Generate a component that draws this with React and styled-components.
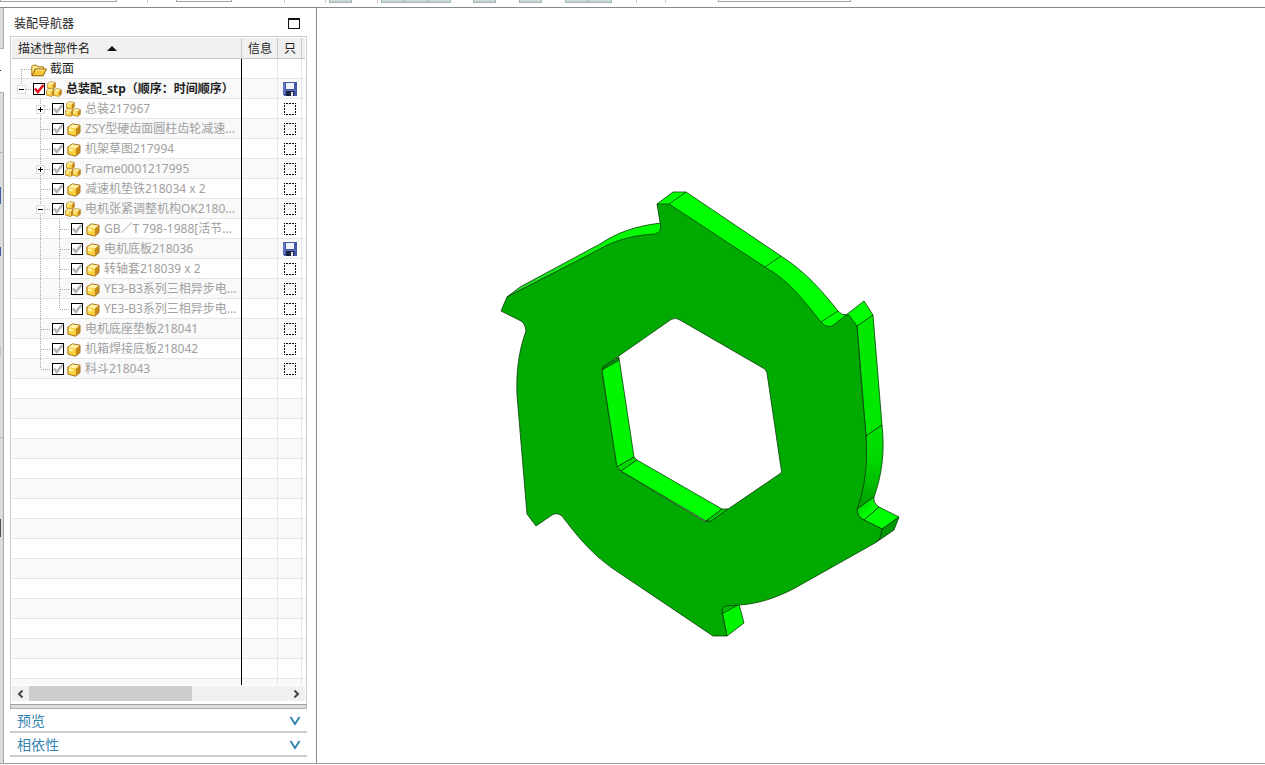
import React from "react";
import styled, { createGlobalStyle } from "styled-components";

const tools = [
  { type: "field", width: 117, gap: 0 },
  { type: "line", gap: 30 },
  { type: "field", width: 56, gap: 28 },
  { type: "line", gap: 52 },
  { type: "line", gap: 40 },
  { type: "toggle", width: 23, gap: 3 },
  { type: "line", gap: 25 },
  { type: "toggle", width: 24, gap: 3 },
  { type: "toggle", width: 24, gap: -1 },
  { type: "toggle", width: 24, gap: -1 },
  { type: "toggle", width: 23, gap: 22 },
  { type: "toggle", width: 23, gap: 23 },
  { type: "toggle", width: 24, gap: 23 },
  { type: "toggle", width: 24, gap: -1 },
  { type: "line", gap: 24 },
  { type: "line", gap: 28 },
  { type: "field", width: 133, gap: 52 },
];

const tabs = [
  { height: 41 },
  { height: 44, active: true, mark: "#222222", size: 1 },
  { height: 60 },
  { height: 85, mark: "#3f5f9f", size: 17, open: true },
  { height: 27, mark: "#3f5f9f", size: 9, open: true },
  { height: 173, mark: "#c4c4c4", size: 11 },
  { height: 179, mark: "#505050", size: 18, open: true },
];

const parts = [
  { name: "截面", level: 0, icon: "folder", down: true },
  {
    name: "总装配_stp（顺序：时间顺序）",
    level: 0,
    icon: "assembly",
    up: true,
    toggle: "minus",
    root: true,
    saved: true,
  },
  { name: "总装217967", level: 1, icon: "assembly", toggle: "plus" },
  { name: "ZSY型硬齿面圆柱齿轮减速...", level: 1, icon: "part" },
  { name: "机架草图217994", level: 1, icon: "part" },
  { name: "Frame0001217995", level: 1, icon: "assembly", toggle: "plus" },
  { name: "减速机垫铁218034 x 2", level: 1, icon: "part" },
  {
    name: "电机张紧调整机构OK2180...",
    level: 1,
    icon: "assembly",
    toggle: "minus",
  },
  { name: "GB∕T 798-1988[活节...", level: 2, icon: "part" },
  { name: "电机底板218036", level: 2, icon: "part", saved: true },
  { name: "转轴套218039 x 2", level: 2, icon: "part" },
  { name: "YE3-B3系列三相异步电...", level: 2, icon: "part" },
  { name: "YE3-B3系列三相异步电...", level: 2, icon: "part", last: true },
  { name: "电机底座垫板218041", level: 1, icon: "part" },
  { name: "机箱焊接底板218042", level: 1, icon: "part" },
  { name: "料斗218043", level: 1, icon: "part", last: true },
];

const emptyRows = Array.from({ length: 40 }, (_, i) => i);

const Guide = ({ up, down, right, toggle }) => (
  <svg width="19" height="20" viewBox="0 0 19 20" shapeRendering="crispEdges">
    <g stroke="#a8a8a8" strokeDasharray="1 1">
      {up && <path d="M9.5 0V10" />}
      {down && <path d="M9.5 10V20" />}
      {right && <path d="M10 10.5H19" />}
    </g>
    {toggle && (
      <>
        <rect x="5.5" y="6.5" width="8" height="8" fill="#fff" stroke="#dcdcdc" />
        <path
          d={toggle === "plus" ? "M7 10.5H12M9.5 8V13" : "M7 10.5H12"}
          stroke="#000"
        />
      </>
    )}
  </svg>
);

const Cube = ({ x = 0, y = 0, size = 14 }) => (
  <svg x={x} y={y} width={size} height={size} viewBox="0 0 14 14">
    <path d="M.8 4 5.5 .8 13 2.200 8.800 5.500Z" fill="#fff2a6" />
    <path d="M.8 4 8.800 5.500V13.200L1 11.200Z" fill="#fdd23c" />
    <path d="M8.800 5.500 13 2.200V9.600L8.800 13.200Z" fill="#c98a12" />
    <path
      d="M.8 4 5.500 .8 13 2.200V9.600L8.800 13.200 1 11.200Z"
      fill="none"
      stroke="#a8741a"
      strokeLinejoin="round"
    />
    <path d="M2 5.500 6 6.300V8.500L2 8Z" fill="#fff3ac" />
  </svg>
);

const PartIcon = ({ icon }) => (
  <svg width="16" height="16" viewBox="0 0 16 16">
    {icon === "part" && <Cube x={2} y={2} size={14} />}
    {icon === "assembly" && (
      <>
        <Cube x={1} y={0} size={9} />
        <Cube x={0} y={7} size={9} />
        <Cube x={7} y={7} size={9} />
      </>
    )}
    {icon === "folder" && (
      <>
        <path
          d="M.8 14.500V5.500L2 4.200H5.500L6.800 5.800H12.500V8"
          fill="#ffe78a"
          stroke="#a87510"
        />
        <path
          d="M1 14.800 4.200 8H15.500L12.200 14.800Z"
          fill="#fbc52f"
          stroke="#8d600c"
          strokeLinejoin="round"
        />
        <path d="M5 9.200H13.600" stroke="#fff0a8" />
      </>
    )}
  </svg>
);

const SaveIcon = () => (
  <svg width="14" height="14" viewBox="0 0 14 14">
    <path d="M0 0H14V14H1.500L0 12.500Z" fill="#4456a8" />
    <path d="M1 1V12" stroke="#8797d8" />
    <path d="M3 1H11V7H3Z" fill="#eef3fb" />
    <path d="M0 8H14V9H0Z" fill="#5c70bc" />
    <path d="M3 9H11V14H3Z" fill="#1c2340" />
    <path d="M8 10H10V14H8Z" fill="#dfe5f5" />
  </svg>
);

const UnloadedIcon = () => (
  <svg width="14" height="14" viewBox="0 0 14 14" shapeRendering="crispEdges">
    <path
      d="M1 1.500H13M1 12.500H13M1.500 1V13M12.500 1V13"
      stroke="#000"
      strokeDasharray="2 1"
      strokeDashoffset="1"
    />
  </svg>
);

const Chevron = () => (
  <svg width="12" height="10" viewBox="0 0 12 10">
    <path d="M1.500 1 6 8 10.500 1" fill="none" stroke="#3684b0" strokeWidth="2" />
  </svg>
);

const Model = () => (
  <Drawing viewBox="317 8 948 755" role="img">
    <defs>
      <linearGradient id="shade" x1="0" y1="0" x2="0" y2="1">
        <stop offset="0" stopColor="#00e400" />
        <stop offset="0.45" stopColor="#00d400" />
        <stop offset="1" stopColor="#009c00" />
      </linearGradient>
      <linearGradient id="fillet" x1="0" y1="0" x2="1" y2="1">
        <stop offset="0" stopColor="#00c000" />
        <stop offset="0.6" stopColor="#00ff00" />
      </linearGradient>
      <linearGradient id="back" x1="0" y1="1" x2="1" y2="0">
        <stop offset="0" stopColor="#2fc82f" />
        <stop offset="0.5" stopColor="#10f010" />
        <stop offset="1" stopColor="#00ff00" />
      </linearGradient>
    </defs>
    <g stroke="#064006" strokeWidth="0.8" strokeLinejoin="round">
      <path
        d="M507 297 520 287 600 244C618 232 636 226 661 223L661 236 598 252Z"
        fill="url(#back)"
      />
      <path
        d="M657 204 673 192H686L781 256C803 270 820 288 838 311Q841 315 847 315L832 329 818 325 760 270 669 208Z"
        fill="#00ff00"
      />
      <path d="M846 315 864 301 873 315 857 327Z" fill="#00ff00" />
      <path d="M857 326 873 315 882 425 866 436Z" fill="#00e800" />
      <path
        d="M866 436 882 425C885 451 882 475 874 497L857 509C866 480 867 460 866 436Z"
        fill="url(#shade)"
      />
      <path
        d="M857 509 874 497Q873 503 879 507L864 520Q857 517 857 509Z"
        fill="url(#fillet)"
      />
      <path d="M864 520 879 507 899 517 882 529Z" fill="#00ff00" />
      <path d="M882 529 899 517 894 530 875 543 880 538Z" fill="#009800" />
      <path d="M722 611 739 604 744 623 727 636Z" fill="#00f600" />
      <path d="M722 614V608L727 605H738Z" fill="#00bc00" />
      <path
        d="M657 204 669 204 765 267C788 280 802 298 821 322Q828 330 835 324L846 315H849L857 326 861 380 866 436C868 463 865 488 857 509Q857 517 864 520L882 529 880 538 875 543 795 588C776 598 758 604 739 605L726 606Q721 608 722 613L727 636H713L612 568C591 553 577 536 562 516Q557 512 552 515L536 526 527 514 517 395C516 371 519 350 526 331Q525 322 519 320L501 311 507 297 598 250C615 240 634 235 655 234Q660 233 661 228ZM671 319.500 603 367Q601 369 602 373L617 466Q618 470 622 472L704 521Q708 523 712 520L781 473Q782 471 781 468L767 373Q766 369 763 368L680 320Q676 317 671 319.500Z"
        fill="#00aa00"
        fillRule="evenodd"
      />
      <path d="M602 370 619 358 634 457 617 467Z" fill="#00f600" />
      <path d="M602 370 603 367 619 357 618 361Z" fill="#009000" />
      <path d="M617 467 634 457 637 460 621 471Z" fill="#00dc00" />
      <path d="M621 471 637 460 722 509 706 521Z" fill="#00ff00" />
      <path d="M706 521 722 509 728 509 711 521Z" fill="#00d000" />
      <path d="M669 204 686 192M765 267 781 256M821 322 838 311" fill="none" />
    </g>
  </Drawing>
);

const Tree = ({ part, id }) => (
  <Branch>
    {part.level > 0 && <Indent />}
    {part.level > 1 && <Guide up down />}
    {part.toggle ? (
      <Expander type="button" aria-expanded={part.toggle === "minus"}>
        <Guide
          up={part.up || part.level > 0}
          down={part.level > 0}
          right
          toggle={part.toggle}
        />
      </Expander>
    ) : (
      <Guide
        up={part.level > 0}
        down={part.level > 0 ? !part.last : part.down}
        right
      />
    )}
    {part.icon !== "folder" && (
      <CheckBox>
        <input type="checkbox" id={id} defaultChecked />
        <svg width="12" height="12" viewBox="0 0 12 12">
          <path
            d="M2 5.500 4.800 9 10.500 2"
            fill="none"
            stroke={part.root ? "#e8101c" : "#b4b4b4"}
            strokeWidth="2.600"
          />
        </svg>
      </CheckBox>
    )}
    <PartIcon icon={part.icon} />
    {part.icon === "folder" ? (
      <FolderName>{part.name}</FolderName>
    ) : (
      <PartName htmlFor={id} $root={part.root}>
        {part.name}
      </PartName>
    )}
  </Branch>
);

const App = () => {
  return (
    <>
      <GlobalStyle />
      <Page>
        <Toolbar>
          {tools.map((tool, i) => {
            if (tool.type === "field")
              return <Field key={i} $width={tool.width} $gap={tool.gap} />;
            if (tool.type === "toggle")
              return (
                <Toggle key={i} type="button" $width={tool.width} $gap={tool.gap} />
              );
            return <Separator key={i} $gap={tool.gap} />;
          })}
        </Toolbar>
        <Workspace>
          <Rail>
            {tabs.map((tab, i) => (
              <RailTab
                key={i}
                type="button"
                $height={tab.height}
                $active={tab.active}
                $open={tab.open}
              >
                {tab.mark && <Mark $color={tab.mark} $size={tab.size} />}
              </RailTab>
            ))}
          </Rail>
          <Navigator>
            <TitleBar>
              <Title>装配导航器</Title>
              <Maximize type="button" aria-label="最大化" />
            </TitleBar>
            <TreeBox>
              <Rows>
                <Table>
                  <colgroup>
                    <col />
                    <col width="36" />
                    <col width="24" />
                    <col width="3" />
                  </colgroup>
                  <thead>
                    <tr>
                      <HeadCell>
                        描述性部件名
                        <svg width="10" height="5" viewBox="0 0 10 5">
                          <path d="M0 5 5 0 10 5Z" fill="#111" />
                        </svg>
                      </HeadCell>
                      <HeadCell>信息</HeadCell>
                      <HeadCell>只</HeadCell>
                      <HeadCell $edge />
                    </tr>
                  </thead>
                  <tbody>
                    {parts.map((part, i) => (
                      <Row key={i}>
                        <NameCell>
                          <Tree part={part} id={"part" + i} />
                        </NameCell>
                        <Cell />
                        <Cell>
                          {part.saved && <SaveIcon />}
                          {!part.saved && part.icon !== "folder" && (
                            <UnloadedIcon />
                          )}
                        </Cell>
                        <Cell $edge />
                      </Row>
                    ))}
                    {emptyRows.map((i) => (
                      <Row key={"empty" + i}>
                        <NameCell />
                        <Cell />
                        <Cell />
                        <Cell $edge />
                      </Row>
                    ))}
                  </tbody>
                </Table>
              </Rows>
              <ScrollBar>
                <ScrollButton type="button" aria-label="向左">
                  <svg width="7" height="8" viewBox="0 0 7 8">
                    <path
                      d="M5.500 .5 2 4 5.500 7.500"
                      fill="none"
                      stroke="#444"
                      strokeWidth="2"
                    />
                  </svg>
                </ScrollButton>
                <Track>
                  <Thumb />
                </Track>
                <ScrollButton type="button" aria-label="向右">
                  <svg width="7" height="8" viewBox="0 0 7 8">
                    <path
                      d="M1.500 .5 5 4 1.500 7.500"
                      fill="none"
                      stroke="#444"
                      strokeWidth="2"
                    />
                  </svg>
                </ScrollButton>
              </ScrollBar>
            </TreeBox>
            <Splitter />
            <Section type="button">
              预览
              <Chevron />
            </Section>
            <Section type="button">
              相依性
              <Chevron />
            </Section>
          </Navigator>
          <Canvas>
            <Model />
          </Canvas>
        </Workspace>
      </Page>
    </>
  );
};

const GlobalStyle = createGlobalStyle`
  * {
    box-sizing: border-box;
  }
  body {
    margin: 0;
    background: #ffffff;
    color: #1e1e1e;
    font-family: "Noto Sans", "Noto Sans CJK SC", sans-serif;
    font-size: 12px;
  }
  button, input, select {
    margin: 0;
    padding: 0;
    font: inherit;
  }
  svg {
    display: block;
    flex: none;
  }
`;

const Page = styled.div`
  display: flex;
  flex-direction: column;
  height: 100vh;
  padding-bottom: 1px;
`;

const Toolbar = styled.div`
  display: flex;
  align-items: flex-end;
  height: 8px;
  padding-bottom: 4px;
  border-bottom: 1px solid #858b8b;
  overflow: hidden;
`;

const Field = styled.select`
  appearance: none;
  flex: none;
  width: ${({ $width }) => $width}px;
  height: 22px;
  margin: 0 0 1px ${({ $gap }) => $gap}px;
  border: 1px solid #a5a5a5;
  border-radius: 0;
  background: #ffffff;
`;

const Toggle = styled.button`
  flex: none;
  width: ${({ $width }) => $width}px;
  height: 22px;
  margin-left: ${({ $gap }) => $gap}px;
  border: 1px solid #a3b5b5;
  background: #c8d8d8;
`;

const Separator = styled.div`
  flex: none;
  width: 1px;
  height: 22px;
  margin-left: ${({ $gap }) => $gap}px;
  background: #c8c8c8;
`;

const Workspace = styled.div`
  display: flex;
  flex: 1;
  min-height: 0;
  border-bottom: 1px solid #a0a0a0;
`;

const Rail = styled.div`
  display: flex;
  flex-direction: column;
  flex: none;
  width: 4px;
  background: #dcdcdc;
  box-shadow: inset -1px 0 #a8a8a8;
`;

const RailTab = styled.button`
  display: flex;
  align-items: center;
  flex: none;
  height: ${({ $height }) => $height}px;
  border: 0;
  border-bottom: ${({ $open }) => ($open ? 0 : 1)}px solid #b4b4b4;
  background: ${({ $active }) => ($active ? "#ffffff" : "transparent")};
`;

const Mark = styled.span`
  width: 1px;
  height: ${({ $size }) => $size}px;
  background: ${({ $color }) => $color};
`;

const Navigator = styled.aside`
  display: flex;
  flex-direction: column;
  flex: none;
  width: 313px;
  padding: 0 9px 6px 6px;
  border-right: 1px solid #858585;
`;

const TitleBar = styled.header`
  display: flex;
  align-items: center;
  justify-content: space-between;
  height: 28px;
  padding: 2px 7px 0 4px;
`;

const Title = styled.h1`
  margin: 0;
  font-size: 12px;
  font-weight: 400;
`;

const Maximize = styled.button`
  width: 12px;
  height: 11px;
  border: 1px solid #111111;
  border-top-width: 2px;
  background: #ffffff;
`;

const TreeBox = styled.div`
  display: flex;
  flex-direction: column;
  flex: 1;
  min-height: 0;
  padding: 1px 1px 3px;
  border: 1px solid #cccccc;
  border-bottom: 0;
`;

const Rows = styled.div`
  flex: 1;
  min-height: 0;
  margin-bottom: 1px;
  overflow: hidden;
`;

const Table = styled.table`
  width: 100%;
  table-layout: fixed;
  border-collapse: separate;
  border-spacing: 0;
`;

const HeadCell = styled.th`
  height: 21px;
  padding: 2px 0 0 ${({ $edge }) => ($edge ? 0 : 6)}px;
  border-right: ${({ $edge }) => ($edge ? 0 : 1)}px solid #c8c8c8;
  border-bottom: 1px solid #c8c8c8;
  background: #f0f0f0;
  line-height: 18px;
  font-weight: 400;
  text-align: left;
  white-space: nowrap;
  svg {
    display: inline-block;
    margin-left: 17px;
    vertical-align: 2px;
  }
`;

const Row = styled.tr`
  &:nth-child(even) {
    background: #f9f9f9;
  }
`;

const Cell = styled.td`
  height: 20px;
  padding: 1px 0 0 ${({ $edge }) => ($edge ? 0 : 5)}px;
  border-right: ${({ $edge }) => ($edge ? 0 : 1)}px solid #e6e6e6;
  border-bottom: 1px solid #e6e6e6;
  line-height: 0;
`;

const NameCell = styled.td`
  height: 20px;
  padding: 0 1px 1px 0;
  box-shadow: inset -1px 0 #000000, inset 0 -1px #e6e6e6;
`;

const Branch = styled.div`
  display: flex;
  align-items: center;
  height: 19px;
`;

const Indent = styled.span`
  flex: none;
  width: 19px;
`;

const Expander = styled.button`
  flex: none;
  border: 0;
  background: none;
`;

const CheckBox = styled.span`
  display: grid;
  flex: none;
  margin: 1px 1px 0 2px;
  input {
    grid-area: 1 / 1;
    appearance: none;
    width: 12px;
    height: 12px;
    border: 1px solid #000000;
    background: #ffffff;
  }
  svg {
    grid-area: 1 / 1;
    visibility: hidden;
    pointer-events: none;
  }
  input:checked + svg {
    visibility: visible;
  }
`;

const PartName = styled.label`
  margin-left: 4px;
  color: ${({ $root }) => ($root ? "#1e1e1e" : "#a0a0a0")};
  font-weight: ${({ $root }) => ($root ? 700 : 400)};
  line-height: 18px;
  white-space: nowrap;
`;

const FolderName = styled.span`
  margin-left: 3px;
  line-height: 18px;
`;

const ScrollBar = styled.div`
  display: flex;
  height: 15px;
  background: #f0f0f0;
`;

const ScrollButton = styled.button`
  display: flex;
  align-items: center;
  justify-content: center;
  width: 17px;
  border: 0;
  background: none;
`;

const Track = styled.div`
  flex: 1;
`;

const Thumb = styled.div`
  width: 63%;
  height: 100%;
  background: #cdcdcd;
`;

const Splitter = styled.div`
  height: 5px;
  border: 1px solid #b0b0b0;
  border-top-color: #a0a0a0;
  background: #dcdcdc;
`;

const Section = styled.button`
  display: flex;
  align-items: center;
  justify-content: space-between;
  height: 24px;
  padding: 2px 6px 0 7px;
  border: 0;
  border-bottom: 2px solid #cccccc;
  background: #ffffff;
  color: #3684b0;
  font-size: 14px;
  line-height: 20px;
`;

const Canvas = styled.main`
  flex: 1;
  min-width: 0;
  background: #ffffff;
`;

const Drawing = styled.svg`
  width: 100%;
  height: 100%;
`;

export default App;
